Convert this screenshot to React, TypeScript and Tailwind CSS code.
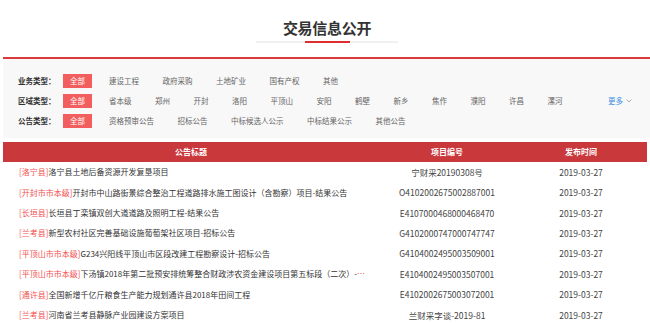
const bizTypes = ["建设工程", "政府采购", "土地矿业", "国有产权", "其他"];
const areas = ["省本级", "郑州", "开封", "洛阳", "平顶山", "安阳", "鹤壁", "新乡", "焦作", "濮阳", "许昌", "漯河"];
const noticeTypes = ["资格预审公告", "招标公告", "中标候选人公示", "中标结果公示", "其他公告"];

const rows = [
  { area: "洛宁县", title: "洛宁县土地后备资源开发复垦项目", code: "宁财采20190308号" },
  { area: "开封市市本级", title: "开封市中山路街景综合整治工程道路排水施工图设计（含勘察）项目-结果公告", code: "O4102002675002887001" },
  { area: "长垣县", title: "长垣县丁栾镇双创大道道路及照明工程-结果公告", code: "E4107000468000468470" },
  { area: "兰考县", title: "新型农村社区完善基础设施葡萄架社区项目-招标公告", code: "G4102000747000747747" },
  { area: "平顶山市市本级", title: "G234兴阳线平顶山市区段改建工程勘察设计-招标公告", code: "G4104002495003509001" },
  { area: "平顶山市市本级", title: "下汤镇2018年第二批预安排统筹整合财政涉农资金建设项目第五标段（二次）-招标公告", code: "E4104002495003507001" },
  { area: "通许县", title: "全国新增千亿斤粮食生产能力规划通许县2018年田间工程", code: "E4102002675003072001" },
  { area: "兰考县", title: "河南省兰考县静脉产业园建设方案项目", code: "兰财采字谈-2019-81" },
];

function FilterRow({ label, items, more }: { label: string; items: string[]; more?: boolean }) {
  return (
    <div className="flex h-[20px] items-center pl-[15px] pr-[18px]">
      <span className="w-[45px] text-[7.5px] font-bold text-[#333]">{label}</span>
      <span className="flex h-[14px] w-[29px] items-center justify-center bg-[#f25d5d] text-[7.5px] text-white">
        全部
      </span>
      <div className="ml-[17px] flex gap-[23.5px] text-[7.5px] text-[#666]">
        {items.map((it) => (
          <span key={it}>{it}</span>
        ))}
      </div>
      {more && (
        <div className="ml-auto flex items-center gap-[3px] text-[7.5px] text-[#3d8fe0]">
          <span>更多</span>
          <svg width="6" height="4" viewBox="0 0 6 4" fill="none">
            <path d="M0.5 0.5 L3 3 L5.5 0.5" stroke="#999" strokeWidth="0.8" />
          </svg>
        </div>
      )}
    </div>
  );
}

export default function App() {
  return (
    <div className="h-[323px] w-[650px] overflow-hidden bg-white font-['Noto_Sans_CJK_SC',sans-serif]">
      <div className="flex flex-col items-center pl-[4px] pt-[18px]">
        <h2 className="text-[15px] font-bold leading-[19px] tracking-[-0.3px] text-[#333]">交易信息公开</h2>
        <div className="mt-[4px] flex h-[2px] w-[142px] justify-center bg-[#f0f0f0]">
          <div className="h-[2px] w-[45px] bg-[#e02d2d]" />
        </div>
      </div>

      <div className="ml-[3px] mt-[14px] h-[2px] bg-[#dc3a3a]" />

      <div className="ml-[3px] bg-[#f8f8f8] pb-[7px] pt-[12px]">
        <FilterRow label="业务类型：" items={bizTypes} />
        <FilterRow label="区域类型：" items={areas} more />
        <FilterRow label="公告类型：" items={noticeTypes} />
      </div>

      <div className="ml-[3px] mt-[4px] w-[644px]">
        <div className="grid h-[20px] grid-cols-[376px_136px_132px] items-center bg-[#c9383b] text-[8px] font-bold text-white">
          <span className="text-center">公告标题</span>
          <span className="text-center">项目编号</span>
          <span className="text-center">发布时间</span>
        </div>
        {rows.map((r, i) => (
          <div key={i} className="grid h-[20.4px] grid-cols-[376px_136px_132px] items-center">
            <div className="truncate pl-[16px] pr-[12px] text-[8px] text-[#f35050]">
              <span>[{r.area}]</span>
              <span className="text-[#333]">{r.title}</span>
            </div>
            <span className="text-center text-[8.5px] text-[#444]">{r.code}</span>
            <span className="text-center text-[8.5px] text-[#444]">2019-03-27</span>
          </div>
        ))}
      </div>
    </div>
  );
}
